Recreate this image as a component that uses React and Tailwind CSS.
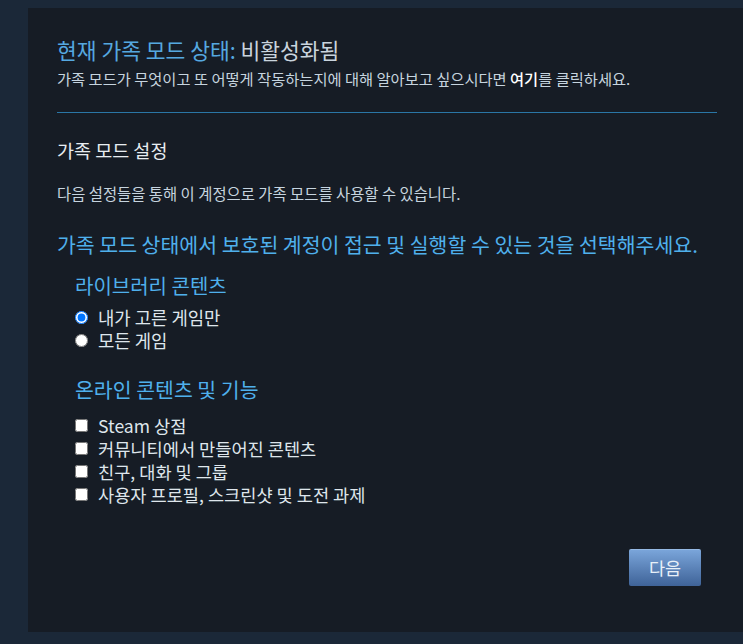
import React from "react";

const FONT = { fontFamily: '"Noto Sans CJK KR", "Noto Sans", sans-serif' };

const LIBRARY = ["내가 고른 게임만", "모든 게임"];
const ONLINE = ["Steam 상점", "커뮤니티에서 만들어진 콘텐츠", "친구, 대화 및 그룹", "사용자 프로필, 스크린샷 및 도전 과제"];

export default function App() {
  return (
    <div className="min-h-[644px] overflow-hidden bg-[#1b2838] pl-[28px] pt-[8px] pb-[12px]" style={FONT}>
      <div className="bg-[#161c25] pl-[29px] pr-[26px] pt-[28px] pb-[46px]">
        <h1 className="text-[21.5px] leading-[28px] text-[#55a8e0]">
          현재 가족 모드 상태: <span className="text-[#c9d4dd]">비활성화됨</span>
        </h1>
        <p className="mt-[4px] text-[15.3px] leading-[20px] text-[#c6d4df]">
          가족 모드가 무엇이고 또 어떻게 작동하는지에 대해 알아보고 싶으시다면 <span className="font-medium text-white">여기</span>를 클릭하세요.
        </p>
        <div className="mt-[24px] h-px bg-[#2a76a6]" />

        <h2 className="mt-[25px] text-[18.5px] leading-[24px] text-[#e8edf1]">가족 모드 설정</h2>
        <p className="mt-[21px] text-[15.4px] leading-[20px] text-[#c6d4df]">
          다음 설정들을 통해 이 계정으로 가족 모드를 사용할 수 있습니다.
        </p>
        <h3 className="mt-[27px] text-[20.5px] leading-[28px] text-[#4fb0ec]">
          가족 모드 상태에서 보호된 계정이 접근 및 실행할 수 있는 것을 선택해주세요.
        </h3>

        <div className="pl-[18px]">
          <h4 className="mt-[15px] text-[20px] leading-[26px] text-[#4fb0ec]">라이브러리 콘텐츠</h4>
          <div className="mt-[7px]">
            {LIBRARY.map((t, i) => (
              <label key={t} className="flex h-[23px] items-center gap-[10px] text-[17.8px] leading-[23px] text-[#dfe6ec]">
                <input type="radio" name="lib" defaultChecked={i === 0} className="m-0 h-[13px] w-[13px]" />
                {t}
              </label>
            ))}
          </div>

          <h4 className="mt-[24px] text-[20.5px] leading-[26px] text-[#4fb0ec]">온라인 콘텐츠 및 기능</h4>
          <div className="mt-[12px]">
            {ONLINE.map((t) => (
              <label key={t} className="flex h-[23px] items-center gap-[10px] text-[17.6px] leading-[23px] text-[#dfe6ec]">
                <input type="checkbox" className="m-0 h-[13px] w-[13px]" />
                {t}
              </label>
            ))}
          </div>
        </div>

        <div className="mt-[43px] flex justify-end pr-[16px]">
          <button className="h-[37px] w-[72px] rounded-[2px] border-t border-[#95b9e4] bg-gradient-to-b from-[#7aa5da] to-[#3f6398] text-[17.5px] text-[#e8f0f8]">
            다음
          </button>
        </div>
      </div>
    </div>
  );
}
